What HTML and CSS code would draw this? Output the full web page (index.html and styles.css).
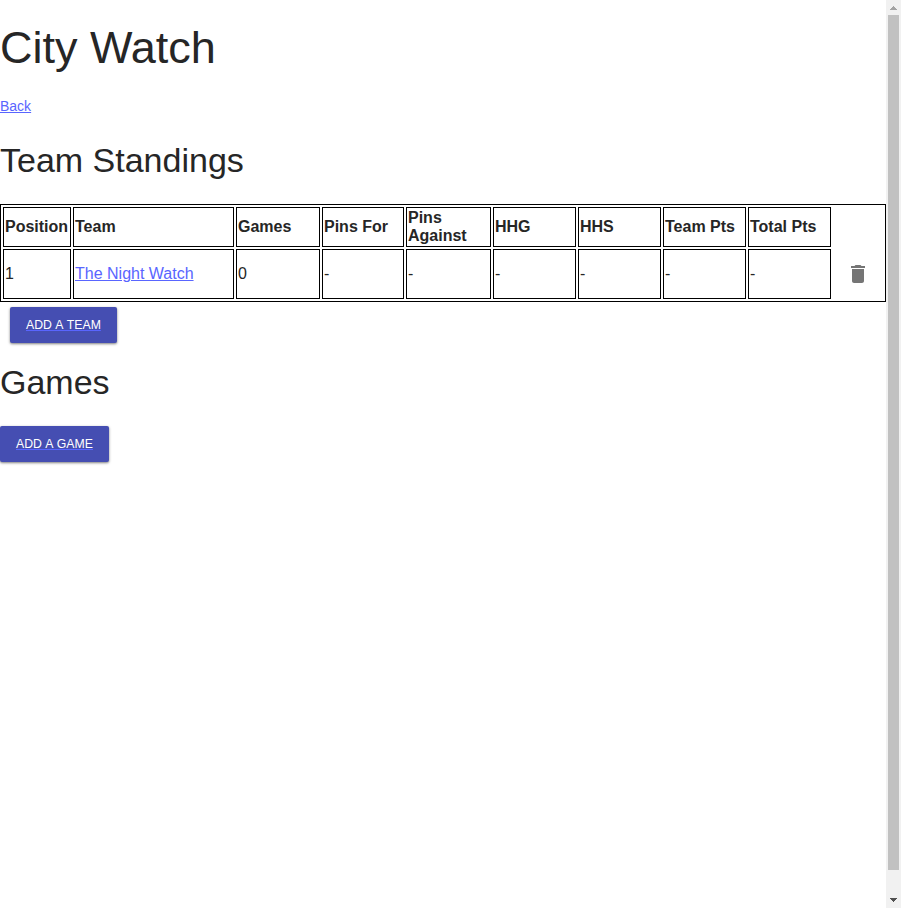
FILE: index.html
```html
<!DOCTYPE html>
<html lang="en">
<head>
<meta charset="utf-8">
<title>City Watch</title>
<link rel="stylesheet" href="styles.css">
</head>
<body>
<div class="viewport">
<main class="content">
<h1 class="title">City Watch</h1>
<p class="back"><a href="#">Back</a></p>
<h2 class="heading">Team Standings</h2>
<table class="standings">
<colgroup><col class="c-position"><col class="c-team"><col class="c-games"><col class="c-for"><col class="c-against"><col class="c-stat"><col class="c-stat"><col class="c-stat"><col class="c-stat"><col class="c-action"></colgroup>
<thead>
<tr><th>Position</th><th>Team</th><th>Games</th><th>Pins For</th><th>Pins Against</th><th>HHG</th><th>HHS</th><th>Team Pts</th><th>Total Pts</th></tr>
</thead>
<tbody>
<tr><td>1</td><td><a href="#">The Night Watch</a></td><td>0</td><td>-</td><td>-</td><td>-</td><td>-</td><td>-</td><td>-</td>
<td class="action"><button class="delete" aria-label="Delete"><svg viewBox="0 0 24 24" width="24" height="24"><path fill="currentColor" d="M6 19c0 1.1.9 2 2 2h8c1.100 0 2-.9 2-2V7H6v12zM19 4h-3.500l-1-1h-5l-1 1H5v2h14V4z"/></svg></button></td></tr>
</tbody>
</table>
<div class="team-actions"><a class="button" href="#"><span>Add a team</span></a></div>
<h2 class="heading games">Games</h2>
<div class="game-actions"><a class="button" href="#"><span>Add a game</span></a></div>
</main>
<div class="scrollbar">
<svg viewBox="0 0 15 15" width="15" height="15" shape-rendering="crispEdges"><path fill="#a3a3a3" d="M7 6h1v1h1v1h1v1h1v1H4V9h1V8h1V7h1z"/></svg>
<div class="thumb"></div>
<svg viewBox="0 0 15 15" width="15" height="15" shape-rendering="crispEdges"><path fill="#505050" d="M4 5h7v1h-1v1H9v1H8v1H7V8H6V7H5V6H4z"/></svg>
</div>
</div>
</body>
</html>
```
FILE: styles.css
```css
body {
  margin: 0;
  overflow: hidden;
  background: #fff;
  color: #262626;
  font-family: "Liberation Sans", Arial, sans-serif;
}

a {
  color: #5965ff;
}

.viewport {
  display: flex;
  height: 100vh;
}

.content {
  flex: 1;
}

.title {
  margin: 24px 0 0;
  font-size: 45px;
  line-height: 48px;
  font-weight: 400;
}

.back {
  margin: 24px 0 0;
  font-size: 14px;
  line-height: 20px;
}

.heading {
  margin: 24px 0 0;
  font-size: 34px;
  line-height: 40px;
  font-weight: 400;
}

.standings {
  width: 886px;
  margin-top: 24px;
  table-layout: fixed;
  border: 1px solid #000;
  border-spacing: 2px;
}

.c-position { width: 68px; }
.c-team { width: 161px; }
.c-games { width: 84px; }
.c-for { width: 82px; }
.c-against { width: 85px; }
.c-stat { width: 83px; }
.c-action { width: 50px; }

th,
td {
  box-sizing: border-box;
  padding: 1px;
  border: 1px solid #000;
  text-align: left;
  font-size: 16px;
  line-height: 18px;
}

th {
  height: 40px;
}

td {
  height: 50px;
}

.standings .action {
  border: 0;
}

.delete {
  display: grid;
  place-items: center;
  width: 48px;
  height: 48px;
  padding: 0;
  border: 0;
  background: none;
  color: #757575;
}

.team-actions {
  display: flex;
  padding: 5px 10px 0;
}

.games {
  margin-top: 19px;
}

.game-actions {
  display: flex;
  margin-top: 24px;
}

.button {
  height: 36px;
  padding: 0 16px;
  border-radius: 2px;
  background: #454eb2;
  box-shadow: 0 1px 3px rgba(0, 0, 0, .35), 0 1px 2px rgba(0, 0, 0, .2);
  font-size: 12.25px;
  font-kerning: none;
  line-height: 36px;
  text-transform: uppercase;
}

.button span {
  color: #fff;
}

.scrollbar {
  display: flex;
  flex-direction: column;
  width: 15px;
  background: #f1f1f1;
}

.thumb {
  height: 855px;
  margin: 0 2px 23px;
  background: #c1c1c1;
}
```
